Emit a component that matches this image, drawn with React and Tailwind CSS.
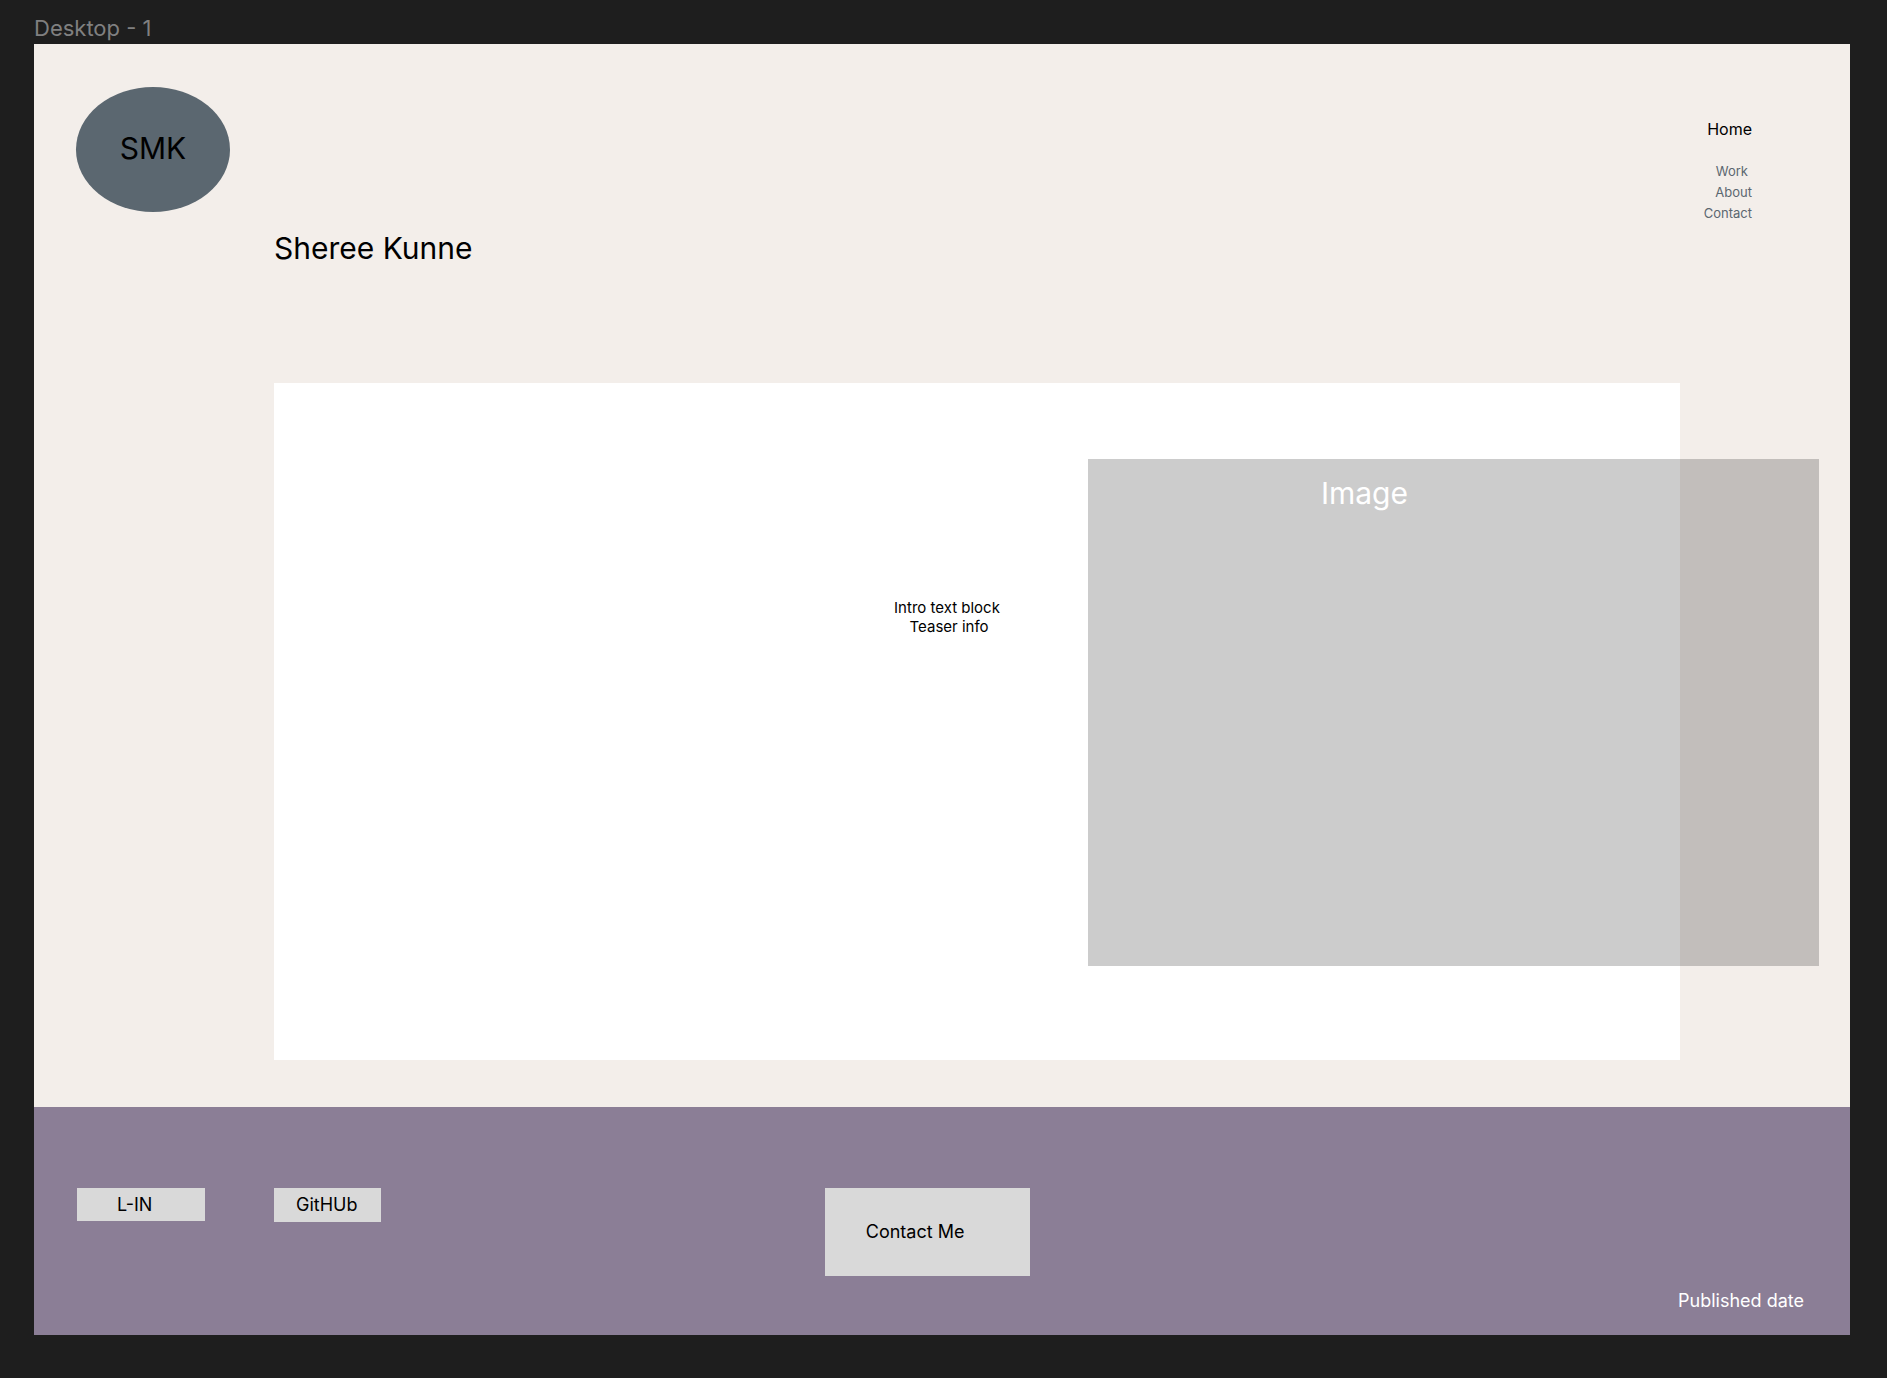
const navLinks = [
  { label: "Work", className: "pr-1" },
  { label: "About", className: "" },
  { label: "Contact", className: "" },
];

function Header() {
  return (
    <header className="flex h-[168px] items-start justify-between pl-[42px] pr-[98px] pt-[43px]">
      <a
        href="#home"
        className="flex h-[125px] w-[154px] items-center justify-center rounded-[50%] bg-[#5b6770] pb-1 text-[30px] leading-9"
      >
        SMK
      </a>
      <nav aria-label="Main" className="flex flex-col items-end pt-[30px]">
        <a href="#home" className="mb-5 text-[16px] leading-6">
          Home
        </a>
        <ul className="flex flex-col items-end text-[13px] leading-[21px] text-[#5b6770]">
          {navLinks.map((link) => (
            <li key={link.label} className={link.className}>
              <a href={"#" + link.label.toLowerCase()}>{link.label}</a>
            </li>
          ))}
        </ul>
      </nav>
    </header>
  );
}

function Intro() {
  return (
    <main className="ml-60 mr-[170px]">
      <h1 className="mt-[18px] text-[30px] leading-9">Sheree Kunne</h1>
      <section className="mt-[117px] flex h-[677px] items-start justify-end bg-white">
        <p className="mr-[88px] mt-[215px] whitespace-pre text-center text-[15px] leading-[19px]">
          {"Intro text block\n Teaser info"}
        </p>
        <div className="-mr-[139px] mt-[76px] h-[507px] w-[52%] shrink-0 bg-black/20 pl-[233px] pt-4 text-[30px] leading-9 text-white">
          Image
        </div>
      </section>
    </main>
  );
}

function Footer() {
  return (
    <footer className="mt-[47px] flex items-start bg-[#8b7e96] pb-[22px] pl-[43px] pr-[46px] pt-[81px] text-[18px] leading-6">
      <div className="flex w-[43.3%] items-start gap-[69px]">
        <button type="button" className="h-[33px] w-32 bg-[#d9d9d9] pl-10 text-left">
          L-IN
        </button>
        <button type="button" className="h-[34px] w-[107px] bg-[#d9d9d9] pl-[22px] text-left">
          GitHUb
        </button>
      </div>
      <button type="button" className="h-[88px] w-[205px] bg-[#d9d9d9] pl-[41px] text-left">
        Contact Me
      </button>
      <p className="ml-auto mt-[101px] text-white">Published date</p>
    </footer>
  );
}

export default function App() {
  return (
    <div className="min-h-screen bg-[#1e1e1e] pb-[43px] pl-[34px] pr-[37px] pt-4 font-['Inter',sans-serif] text-black">
      <p className="h-7 text-[22px] leading-6 text-[#808080]">Desktop - 1</p>
      <div className="bg-[#f3eeea]">
        <Header />
        <Intro />
        <Footer />
      </div>
    </div>
  );
}
